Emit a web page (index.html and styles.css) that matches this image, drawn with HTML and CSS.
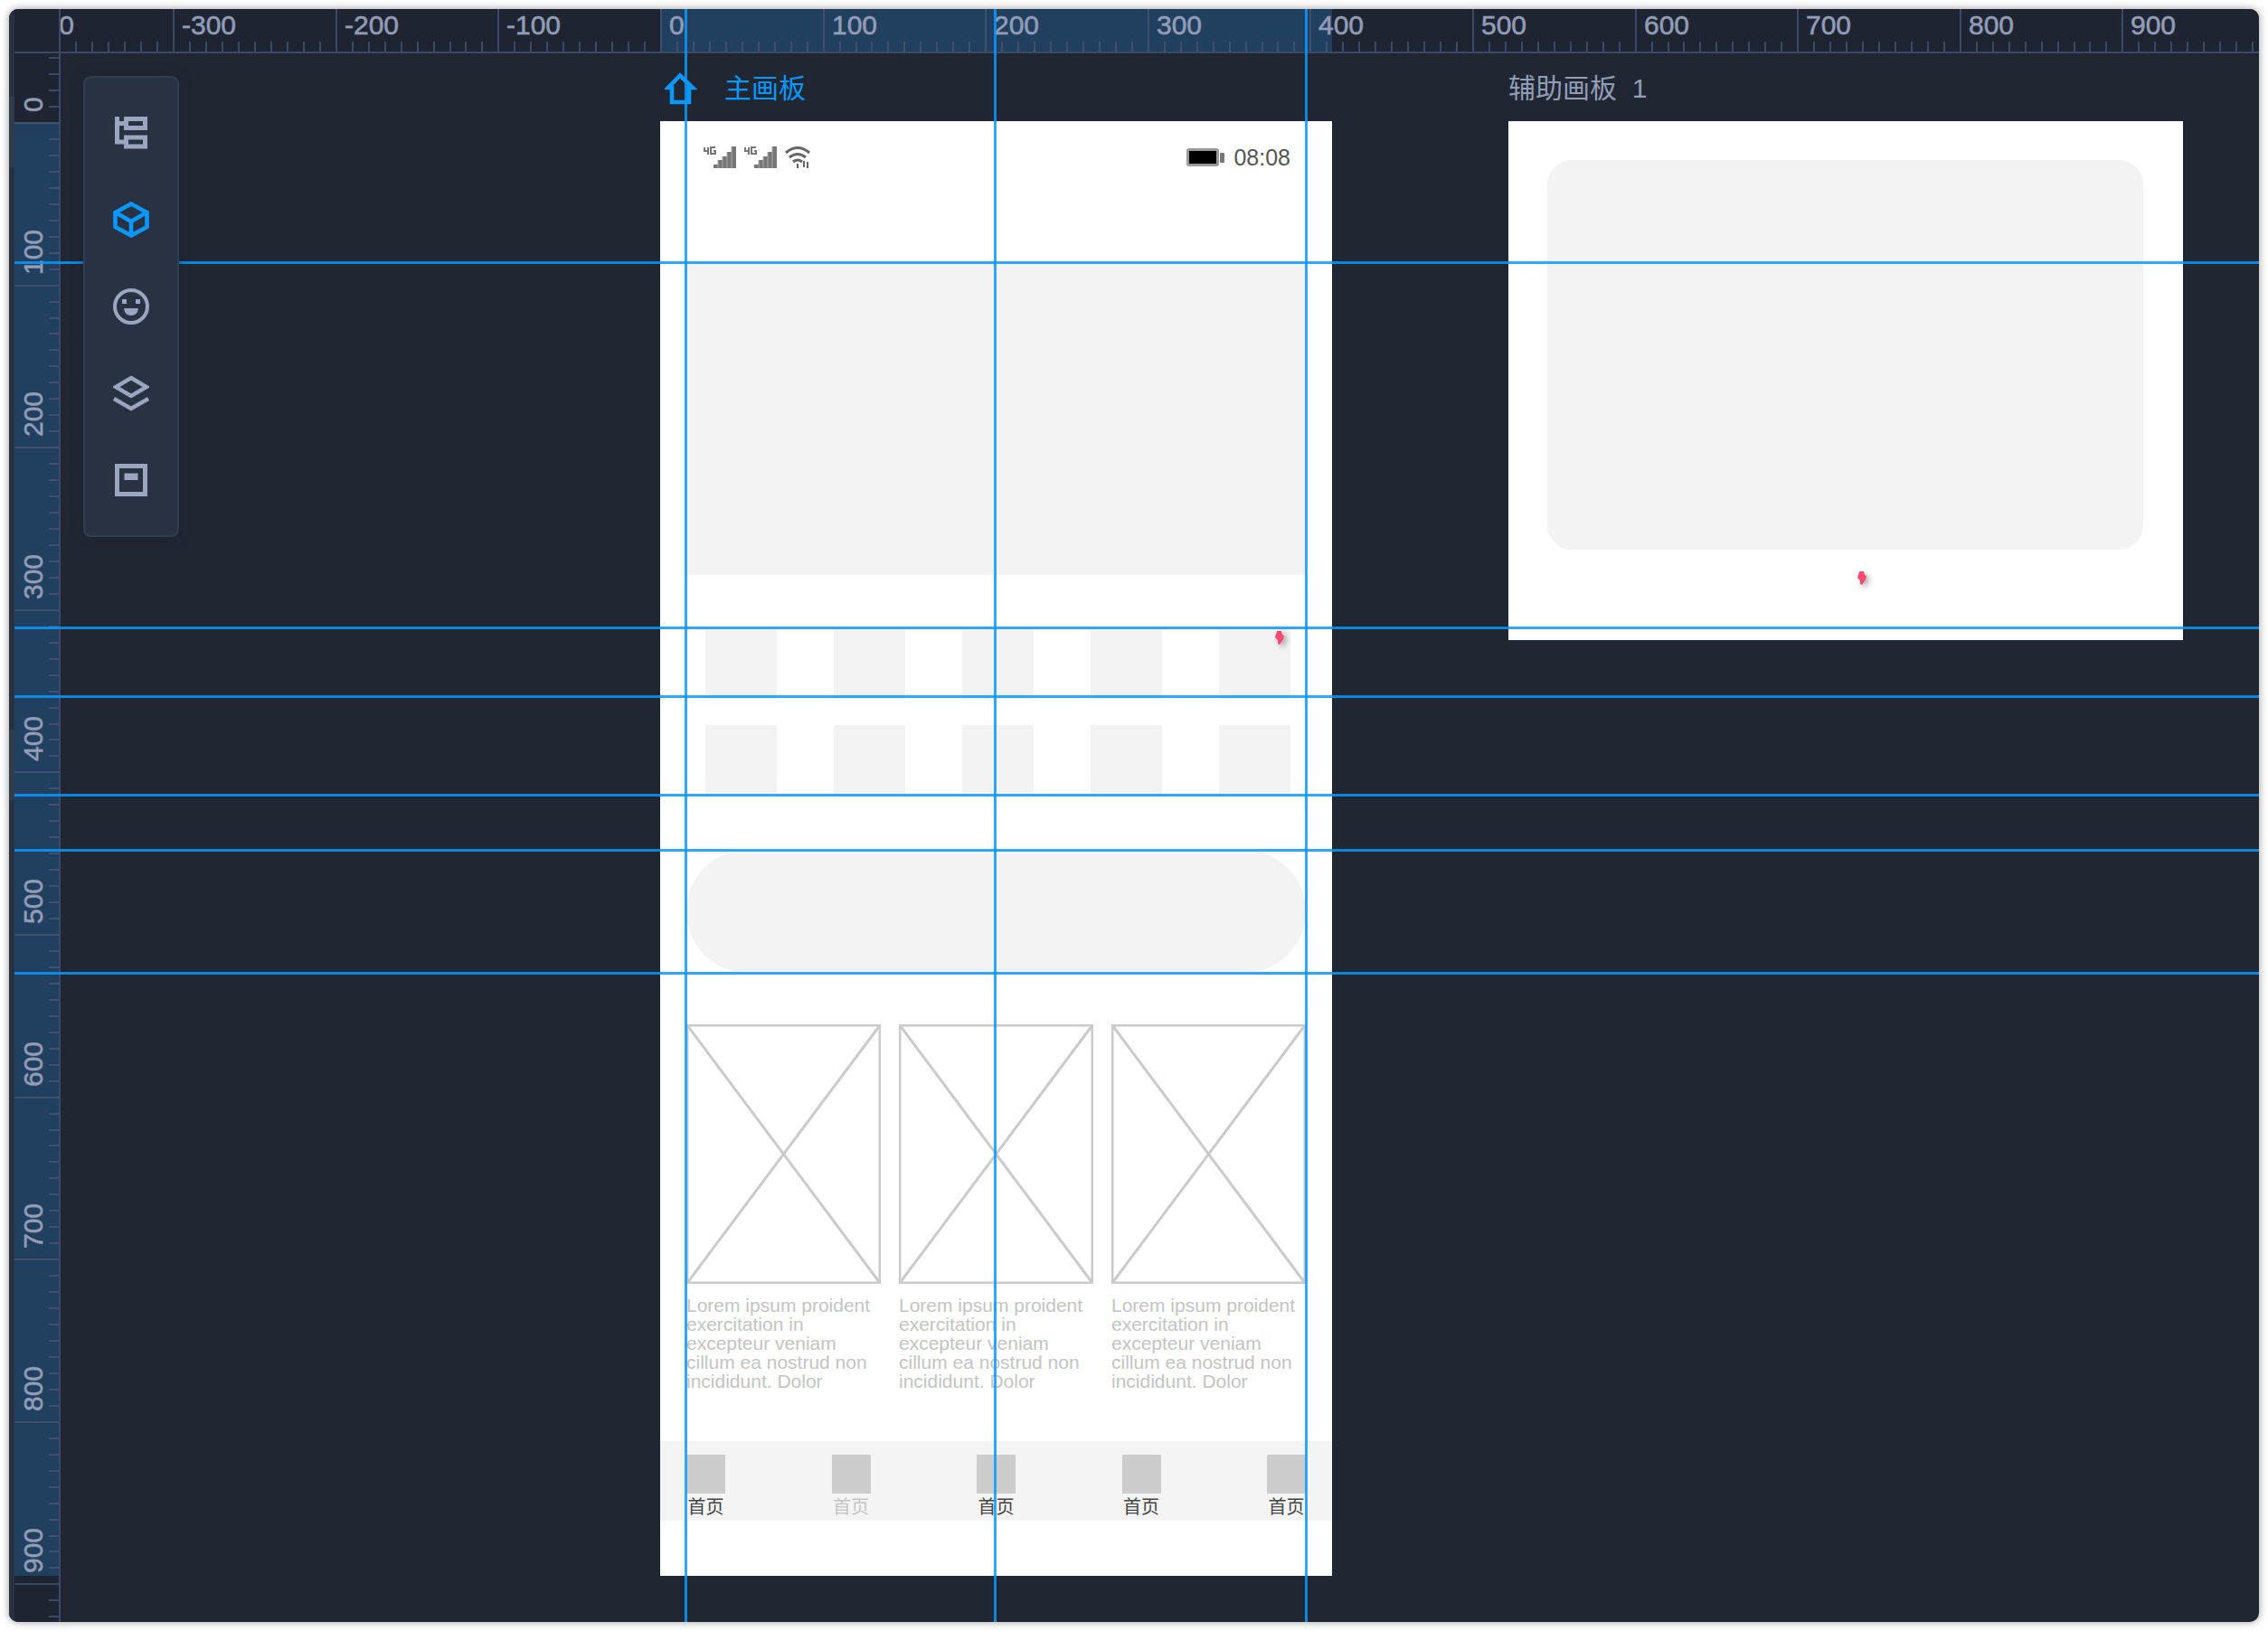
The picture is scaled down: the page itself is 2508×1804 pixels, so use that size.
FILE: index.html
```html
<!DOCTYPE html>
<html lang="zh-CN">
<head>
<meta charset="utf-8">
<title>主画板</title>
<link rel="stylesheet" href="styles.css">
</head>
<body>
<main class="app">
  <div class="edge"><span class="edge-thumb"></span><span class="edge-thumb"></span></div>
  <div class="corner"></div>
  <svg class="ruler ruler-x" id="ruler-x" aria-hidden="true"></svg>
  <svg class="ruler ruler-y" id="ruler-y" aria-hidden="true"></svg>

  <div class="canvas">
    <section class="artboard artboard-main">
      <header class="artboard-title is-active">
        <svg class="home" viewBox="0 0 36 36"><path d="M17 3.500 4 17h4v16h19V17h4z" fill="none" stroke="currentColor" stroke-width="4.600"/></svg>
        <h2 class="title-text">主画板</h2>
      </header>
      <div class="board">
        <div class="status">
          <svg class="signals" viewBox="0 0 120 24">
            <defs>
              <g id="cell">
                <path d="M1 1v4h5M5 1v8M13 1H8v7h5V5h-2" fill="none" stroke="#777" stroke-width="2"/>
                <path d="M11 24v-4h5v4zM16 24v-9h5v9zM21 24V11h5v13zM26 24V6h5v18zM31 24V0h5v24z" fill="#777"/>
                <path d="M16 24v-9M21 24V11M26 24V6M31 24V0" stroke="#aaa" stroke-width="1"/>
              </g>
            </defs>
            <use href="#cell"/>
            <use href="#cell" x="45"/>
            <g fill="none" stroke="#666" stroke-width="3">
              <path d="M91 7q13-11 26 0M95 12q9-7 18 0M99 17q5-4 10 0"/>
              <path d="M104 19v5M111 16v7M115 24v-7" stroke-width="2"/>
            </g>
          </svg>
          <div class="status-right">
            <svg class="battery" viewBox="0 0 44 22"><rect x="1" y="1" width="36" height="20" rx="3" fill="#999"/><rect x="4" y="4" width="30" height="14" fill="#000"/><rect x="38" y="6" width="5" height="11" rx="1" fill="#777"/></svg>
            <span class="clock">08:08</span>
          </div>
        </div>
        <div class="hero"></div>
        <div class="tiles">
          <i class="tile"></i><i class="tile"></i><i class="tile"></i><i class="tile"></i><i class="tile"></i>
          <i class="tile"></i><i class="tile"></i><i class="tile"></i><i class="tile"></i><i class="tile"></i>
        </div>
        <div class="pill"></div>
        <div class="cards">
          <article class="card">
            <svg class="picture" viewBox="0 0 215 287"><path d="M1 1 214 286M214 1 1 286"/><rect x="1" y="1" width="213" height="285"/></svg>
            <p class="card-text">Lorem ipsum proident exercitation in excepteur veniam cillum ea nostrud non incididunt. Dolor</p>
          </article>
          <article class="card">
            <svg class="picture" viewBox="0 0 215 287"><path d="M1 1 214 286M214 1 1 286"/><rect x="1" y="1" width="213" height="285"/></svg>
            <p class="card-text">Lorem ipsum proident exercitation in excepteur veniam cillum ea nostrud non incididunt. Dolor</p>
          </article>
          <article class="card">
            <svg class="picture" viewBox="0 0 215 287"><path d="M1 1 214 286M214 1 1 286"/><rect x="1" y="1" width="213" height="285"/></svg>
            <p class="card-text">Lorem ipsum proident exercitation in excepteur veniam cillum ea nostrud non incididunt. Dolor</p>
          </article>
        </div>
        <nav class="tabs">
          <span class="tab"><i class="tab-icon"></i>首页</span>
          <span class="tab tab-muted"><i class="tab-icon"></i>首页</span>
          <span class="tab"><i class="tab-icon"></i>首页</span>
          <span class="tab"><i class="tab-icon"></i>首页</span>
          <span class="tab"><i class="tab-icon"></i>首页</span>
        </nav>
        <svg class="pin pin-tile" viewBox="0 0 12 18"><path d="M3 1h5l1 4 2 1-1 4-4 6-2-1V11L1 8l1-3z"/></svg>
      </div>
    </section>

    <section class="artboard artboard-aux">
      <header class="artboard-title"><h2 class="title-text">辅助画板  1</h2></header>
      <div class="board board-aux">
        <div class="panel"></div>
        <svg class="pin pin-panel" viewBox="0 0 12 18"><path d="M3 1h5l1 4 2 1-1 4-4 6-2-1V11L1 8l1-3z"/></svg>
      </div>
    </section>
  </div>

  <div class="guides" id="guides" aria-hidden="true"></div>

  <div class="toolbar" role="toolbar" aria-label="工具">
    <button class="tool" type="button" aria-label="页面">
      <svg viewBox="0 0 40 40"><path d="M4.500 2v28H14M4.500 9.500H14M14.500 4.500h21v10h-21zM14.500 25h21v10h-21z" fill="none" stroke="currentColor" stroke-width="5"/></svg>
    </button>
    <button class="tool is-active" type="button" aria-label="组件">
      <svg viewBox="0 0 40 40"><path d="M20 2.500 37.500 12v16L20 37.500 2.500 28V12zM3 12l17 10 17-10M20 22v15" fill="none" stroke="currentColor" stroke-width="4.600"/></svg>
    </button>
    <button class="tool" type="button" aria-label="图标">
      <svg viewBox="0 0 40 40"><circle cx="20" cy="20" r="18" fill="none" stroke="currentColor" stroke-width="4"/><path d="M10 12h5v5h-5zM25 12h5v5h-5zM12 22h16q-1 8-8 8t-8-8z" fill="currentColor"/></svg>
    </button>
    <button class="tool" type="button" aria-label="图层">
      <svg viewBox="0 0 40 40"><path d="M20 3 37 13 20 23 3 13zM1 26l19 11 19-11" fill="none" stroke="currentColor" stroke-width="4.400"/></svg>
    </button>
    <button class="tool" type="button" aria-label="母版">
      <svg viewBox="0 0 40 40"><rect x="4.500" y="4.500" width="31" height="31" fill="none" stroke="currentColor" stroke-width="5"/><path d="M12.500 12.500h15V20h-15z" fill="currentColor"/></svg>
    </button>
  </div>
</main>
<script src="rulers.js"></script>
</body>
</html>
```

FILE: styles.css
```css
* { box-sizing: border-box; }

body {
  margin: 0;
  padding: 10px;
  background: #fff;
  font-family: "Liberation Sans", "Noto Sans CJK SC", sans-serif;
}

.app {
  position: relative;
  display: grid;
  grid-template-columns: 6px 51px 1fr;
  grid-template-rows: 49px 1fr;
  min-height: calc(100vh - 20px);
  overflow: hidden;
  border-radius: 10px;
  background: #202733;
  box-shadow: 0 0 10px rgba(0, 0, 0, 0.4);
}

/* Rulers */
.edge {
  grid-row: 1 / 3;
  display: flex;
  flex-direction: column;
  gap: 622px;
  padding-top: 97px;
  background: #273140;
}
.edge-thumb { height: 78px; background: #303c4c; }
.corner {
  background: #1e2431;
  border-right: 2px solid #3b4866;
  border-bottom: 2px solid #3b4866;
}
.ruler { display: block; background: #1e2431; }
.ruler-x { width: 100%; height: 49px; border-bottom: 2px solid #3b4866; }
.ruler-y { grid-column: 2; width: 51px; height: 100%; border-right: 2px solid #3b4866; }
.ruler-band { fill: #21405f; }
.ruler-tick { fill: #3b4866; }
.ruler-tick.on-band { fill: #414e6c; }
.ruler-label {
  fill: #939db8;
  stroke: #939db8;
  stroke-width: 1px;
  stroke-opacity: 0.6;
  font-size: 30px;
}

/* Canvas */
.canvas { position: relative; overflow: hidden; }
.artboard { position: absolute; top: 3px; }
.artboard-main { left: 663px; width: 743px; }
.artboard-aux { left: 1601px; width: 746px; }
.artboard-title {
  display: flex;
  align-items: center;
  gap: 30px;
  height: 72px;
  color: #939db8;
}
.artboard-title.is-active { padding-left: 5px; color: #0a98ff; }
.home { width: 36px; height: 36px; }
.title-text {
  margin: 0;
  font-size: 30px;
  font-weight: 400;
  line-height: 40px;
  white-space: pre;
}
.board { position: relative; padding-bottom: 61px; background: #fff; }

.status {
  display: flex;
  justify-content: space-between;
  height: 156px;
  padding: 28px 46px 0 48px;
}
.signals { width: 120px; height: 24px; }
.status-right { display: flex; gap: 9px; height: 24px; align-items: center; }
.battery { width: 44px; height: 22px; }
.clock { color: #555; font-size: 25px; line-height: 24px; }

.hero { height: 346px; margin: 0 29px; background: #f3f3f3; }
.tiles {
  display: grid;
  grid-template-columns: repeat(5, 79px);
  grid-auto-rows: 78px;
  justify-content: space-between;
  row-gap: 29px;
  padding: 59px 46px 60px 50px;
}
.tile { background: #f3f3f3; }
.pill { height: 136px; margin: 0 29px; border-radius: 68px; background: #f3f3f3; }

.cards {
  display: grid;
  grid-template-columns: repeat(3, 1fr);
  gap: 20px;
  padding: 57px 29px 56px;
}
.picture {
  display: block;
  width: 100%;
  fill: none;
  stroke: #cbcbcb;
  stroke-width: 3;
}
.card-text { margin: 13px 0 0; color: #c4c4c4; font-size: 21px; line-height: 21px; }

.tabs {
  display: flex;
  justify-content: space-between;
  height: 88px;
  padding: 15px 29px 0;
  background: #f4f4f4;
}
.tab {
  display: flex;
  flex-direction: column;
  align-items: center;
  color: #444;
  font-size: 20px;
  line-height: 30px;
}
.tab-muted { color: #c4c4c4; }
.tab-icon { flex: none; width: 43px; height: 43px; background: #ccc; }

.board-aux { height: 574px; padding: 43px 44px 0 43px; }
.panel { height: 431px; border-radius: 27px; background: #f3f3f3; }

.pin {
  position: absolute;
  width: 12px;
  height: 18px;
  overflow: visible;
  fill: #ff4a6e;
  filter: drop-shadow(3px 3px 3px rgba(0, 0, 0, 0.35));
}
.pin-tile { left: 679px; top: 563px; }
.pin-panel { left: 385px; top: 497px; }

/* Guides lie over the rulers and artboards */
.guides { position: absolute; inset: 0 0 0 6px; pointer-events: none; }
.guide { position: absolute; background: #0a98ff; opacity: 0.85; }
.guide-x { left: 0; right: 0; height: 3px; }
.guide-y { top: 0; bottom: 0; width: 3px; }

/* Floating tools */
.toolbar {
  position: absolute;
  left: 82px;
  top: 74px;
  display: flex;
  flex-direction: column;
  align-items: center;
  gap: 56px;
  width: 106px;
  padding: 41px 0;
  border: 2px solid #303d4f;
  border-radius: 8px;
  background: #293242;
  box-shadow: 0 0 12px rgba(20, 34, 44, 0.5);
}
.tool {
  width: 40px;
  height: 40px;
  padding: 0;
  border: 0;
  background: none;
  color: #9ba5c0;
}
.tool.is-active { color: #0a98ff; }
.tool svg { display: block; width: 40px; height: 40px; }
```

FILE: rulers.js
```js
// Rulers and guides. One canvas unit is drawn 1.796px wide.
const SCALE = 1.796;
const NS = "http://www.w3.org/2000/svg";

function add(parent, name, attrs, text) {
  const el = document.createElementNS(NS, name);
  for (const key in attrs) el.setAttribute(key, attrs[key]);
  if (text !== undefined) el.textContent = text;
  parent.appendChild(el);
}

function drawRuler(svg, vertical, origin, size, from, to) {
  const thick = vertical ? 49 : 47;
  const end = origin + Math.round(size * SCALE);
  const bar = (cls, pos, length, depth) => add(svg, "rect", vertical
    ? { class: cls, x: thick - depth, y: pos, width: depth, height: length }
    : { class: cls, x: pos, y: thick - depth, width: length, height: depth });
  bar("ruler-band", origin, end - origin, thick);
  for (let unit = from; unit <= to; unit += 10) {
    const pos = origin + Math.round(unit * SCALE);
    const major = unit % 100 === 0;
    const band = pos >= origin && pos < end ? " on-band" : "";
    bar("ruler-tick" + band, pos - 1, 2, major ? thick : 11);
    if (!major) continue;
    add(svg, "text", vertical
      ? { class: "ruler-label", transform: `translate(31 ${pos - 12}) rotate(-90)` }
      : { class: "ruler-label", x: pos + 9, y: 28 }, unit);
  }
}

drawRuler(document.getElementById("ruler-x"), false, 664, 413, -400, 980);
drawRuler(document.getElementById("ruler-y"), true, 77, 895, -40, 920);

const guides = document.getElementById("guides");
function addGuide(cls, side, value) {
  const el = document.createElement("div");
  el.className = "guide " + cls;
  el.style[side] = value + "px";
  guides.appendChild(el);
}
[279, 683, 759, 868, 929, 1065].forEach(y => addGuide("guide-x", "top", y));
[741, 1083, 1427].forEach(x => addGuide("guide-y", "left", x));
```
